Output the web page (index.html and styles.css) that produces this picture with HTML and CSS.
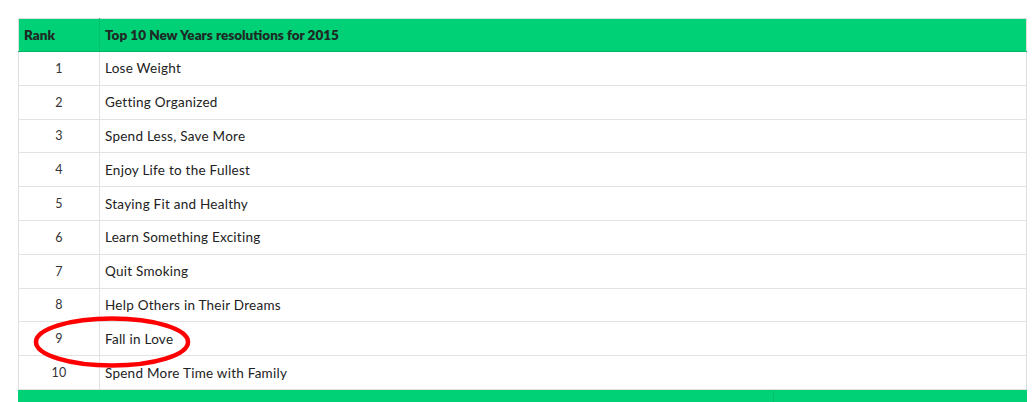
FILE: index.html
```html
<!DOCTYPE html>
<html>
<head>
<meta charset="utf-8">
<link rel="stylesheet" href="styles.css">
</head>
<body>
<div class="wrap">
  <table class="tbl">
    <thead>
      <tr><th class="rank">Rank</th><th>Top 10 New Years resolutions for 2015</th></tr>
    </thead>
    <tbody>
      <tr><td class="num">1</td><td>Lose Weight</td></tr>
      <tr><td class="num">2</td><td>Getting Organized</td></tr>
      <tr><td class="num">3</td><td>Spend Less, Save More</td></tr>
      <tr><td class="num">4</td><td>Enjoy Life to the Fullest</td></tr>
      <tr><td class="num">5</td><td>Staying Fit and Healthy</td></tr>
      <tr><td class="num">6</td><td>Learn Something Exciting</td></tr>
      <tr><td class="num">7</td><td>Quit Smoking</td></tr>
      <tr><td class="num">8</td><td>Help Others in Their Dreams</td></tr>
      <tr><td class="num">9</td><td>Fall in Love</td></tr>
      <tr><td class="num">10</td><td>Spend More Time with Family</td></tr>
    </tbody>
  </table>
  <div class="foot"><div class="foot-a"></div><div class="foot-b"></div></div>
  <svg class="circle" width="170" height="62" viewBox="0 0 170 62">
    <ellipse cx="85" cy="31" rx="76" ry="23.5" fill="none" stroke="#ff0000" stroke-width="4.5"/>
  </svg>
</div>
</body>
</html>
```
FILE: styles.css
```css
html, body { margin: 0; padding: 0; background: #fff; }
body { font-family: Lato, "Open Sans", sans-serif; color: #222; }
.wrap { position: relative; padding: 18px 8px 0 18px; width: 1009px; }
.tbl {
  width: 1009px;
  border-collapse: collapse;
  border: 1px solid #dedede;
  font-size: 13.5px;
}
.tbl th {
  background: #00d176;
  height: 32px;
  text-align: left;
  font-weight: 800;
  padding: 0 0 0 5px;
  border-bottom: 1px solid #00b864;
  border-left: 1px solid #00c26c;
  color: #1e2a25;
}
.tbl th.rank { width: 75px; border-left: none; }
.tbl td {
  height: 32.8px;
  padding: 0 0 0 5px;
  border-bottom: 1px solid #e2e2e2;
  border-left: 1px solid #e2e2e2;
  letter-spacing: 0.25px;
  color: #222;
}
.tbl td.num { text-align: center; padding: 0; border-left: none; font-size: 12.5px; color: #333; }
.foot { display: flex; height: 12px; border-top: 1px solid #dedede; margin-top: -1px; }
.foot-a { width: 755px; background: #00d176; border-right: 1px solid #00c26c; }
.foot-b { flex: 1; background: #00d176; }
.circle { position: absolute; left: 27px; top: 311px; }
```
